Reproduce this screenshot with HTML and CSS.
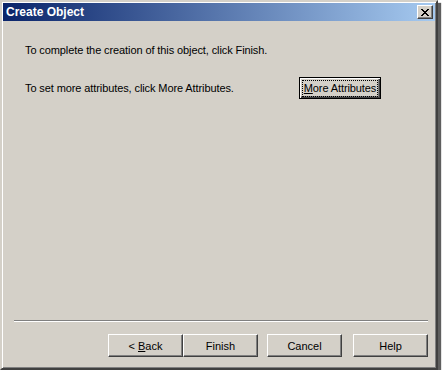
FILE: index.html
```html
<!DOCTYPE html>
<html lang="en">
<head>
    <meta charset="UTF-8">
    <meta name="viewport" content="width=device-width, initial-scale=1.0">
    <title>Create Object</title>
    <link rel="stylesheet" href="styles.css">
</head>
<body>
    <div class="window">
        <div class="title-bar">
            <span class="title">Create Object</span>
            <button class="close-btn" aria-label="Close">
                <svg width="8" height="7" viewBox="0 0 8 7">
                    <path d="M0 0h2v1h1v1h2V1h1V0h2v1H7v1H6v1H5v1h1v1h1v1h1v1H6V6H5V5H3v1H2v1H0V6h1V5h1V4h1V3H2V2H1V1H0z" fill="#000"/>
                </svg>
            </button>
        </div>

        <div class="content">
            <p class="line">To complete the creation of this object, click Finish.</p>
            <div class="row">
                <p class="line">To set more attributes, click More Attributes.</p>
                <button class="btn default"><span class="focus"><u>M</u>ore Attributes</span></button>
            </div>
        </div>

        <div class="footer">
            <div class="separator"></div>
            <div class="buttons">
                <button class="btn">&lt; <u>B</u>ack</button>
                <button class="btn">Finish</button>
                <button class="btn gap">Cancel</button>
                <button class="btn gap-wide">Help</button>
            </div>
        </div>
    </div>
</body>
</html>
```

FILE: styles.css
```css
/* General Styles */
body {
    margin: 0;
    padding: 0;
    background: #ffffff;
    font-family: Tahoma, "Liberation Sans", Arial, sans-serif;
    font-size: 11px;
    color: #000;
}

/* Window frame */
.window {
    width: 438px;
    height: 370px;
    box-sizing: border-box;
    display: flex;
    flex-direction: column;
    background: #d4d0c8;
    padding: 1px;
    border: 2px solid;
    border-color: #d4d0c8 #404040 #404040 #d4d0c8;
    box-shadow: inset 1px 1px #ffffff, inset -1px -1px #808080, 3px 3px 1px rgba(40, 40, 40, 0.75);
}

/* Title bar */
.title-bar {
    height: 18px;
    display: flex;
    align-items: center;
    justify-content: space-between;
    padding: 0 2px 0 3px;
    background: linear-gradient(to right, #0a246a, #a6caf0);
}

.title {
    color: #ffffff;
    font-weight: bold;
    font-size: 12px;
}

.close-btn {
    width: 16px;
    height: 14px;
    padding: 0;
    margin: 0;
    display: flex;
    align-items: center;
    justify-content: center;
    background: #d4d0c8;
    border: 1px solid;
    border-color: #ffffff #404040 #404040 #ffffff;
    box-shadow: inset -1px -1px #808080;
}

/* Content */
.content {
    padding: 22px 0 0 22px;
}

.line {
    margin: 0;
    line-height: 14px;
    letter-spacing: -0.1px;
}

.row {
    display: flex;
    align-items: center;
    margin-top: 20px;
}

.row .line {
    width: 274px;
}

/* Buttons */
.btn {
    width: 75px;
    height: 23px;
    padding: 0;
    font-family: inherit;
    font-size: 11px;
    color: #000;
    background: #d4d0c8;
    border: 1px solid;
    border-color: #ffffff #404040 #404040 #ffffff;
    box-shadow: inset -1px -1px #808080;
}

.btn.default {
    width: 82px;
    height: 22px;
    display: flex;
    align-items: center;
    justify-content: center;
    border-color: #000;
    box-shadow: inset 1px 1px #ffffff, inset -1px -1px #404040, inset -2px -2px #808080;
}

.focus {
    padding: 1px 1px;
    outline: 1px dotted #000;
    line-height: 13px;
    letter-spacing: -0.1px;
}

/* Footer */
.footer {
    margin-top: auto;
    padding-bottom: 10px;
}

.separator {
    margin: 0 7px 0 11px;
    border-top: 1px solid #808080;
    border-bottom: 1px solid #ffffff;
    height: 0;
}

.buttons {
    display: flex;
    justify-content: flex-end;
    padding-right: 7px;
    margin-top: 12px;
}

.btn.gap {
    margin-left: 9px;
}

.btn.gap-wide {
    margin-left: 11px;
}
```
